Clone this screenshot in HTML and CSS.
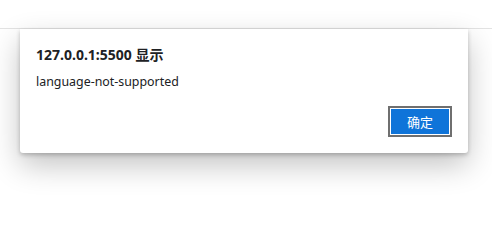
FILE: index.html
```html
<!DOCTYPE html>
<html lang="zh-CN">
<head>
<meta charset="utf-8">
<link rel="stylesheet" href="styles.css">
</head>
<body>
<div class="topbar"></div>
<div class="dialog">
  <div class="title">127.0.0.1:5500 显示</div>
  <div class="message">language-not-supported</div>
  <div class="actions">
    <button class="ok">确定</button>
  </div>
</div>
</body>
</html>
```
FILE: styles.css
```css
html, body {
  margin: 0;
  padding: 0;
  background: #ffffff;
}
body {
  font-family: "Noto Sans", "Noto Sans CJK SC", sans-serif;
  color: #202124;
  width: 492px;
  height: 205px;
  overflow: hidden;
}
.topbar {
  height: 28px;
  border-bottom: 1px solid #e3e3e3;
}
.dialog {
  margin-left: 20px;
  width: 448px;
  height: 124px;
  box-sizing: border-box;
  padding: 16px;
  background: #ffffff;
  border-radius: 0 0 3px 3px;
  box-shadow: 0 12px 30px rgba(0,0,0,0.24), 0 2px 4px rgba(0,0,0,0.22);
  display: flex;
  flex-direction: column;
}
.title {
  font-size: 14px;
  font-weight: bold;
  line-height: 20px;
}
.message {
  font-size: 12.4px;
  line-height: 18px;
  margin-top: 8px;
}
.actions {
  margin-top: auto;
  display: flex;
  justify-content: flex-end;
}
.ok {
  width: 64px;
  height: 31px;
  box-sizing: border-box;
  background: #0f74d9;
  color: #ffffff;
  font-family: "Noto Sans CJK SC", sans-serif;
  font-size: 13px;
  border: 2px solid #6f6f6f;
  box-shadow: inset 0 0 0 1px #ffffff;
  padding: 0;
}
```
